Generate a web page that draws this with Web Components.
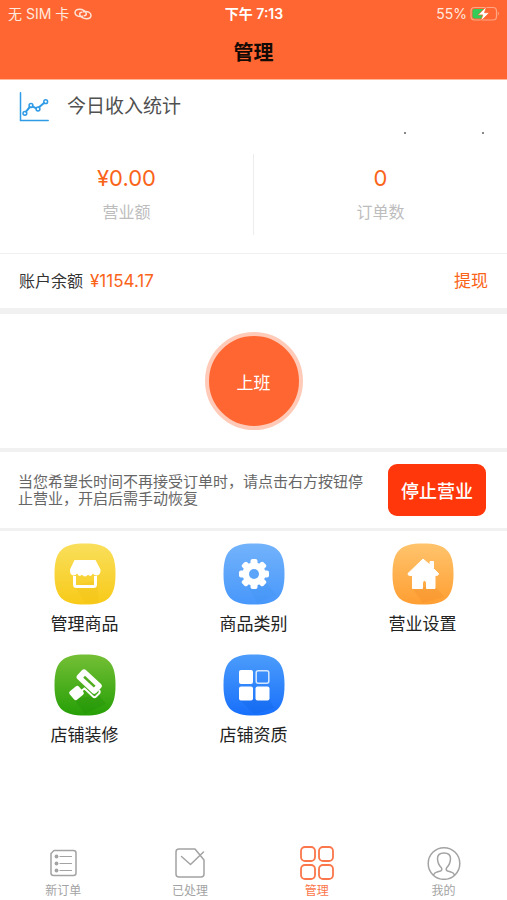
<!DOCTYPE html>
<html lang="zh-CN">
<head>
<meta charset="utf-8">
<meta name="viewport" content="width=device-width, initial-scale=1">
<title>管理</title>
<style>
html, body { margin: 0; min-height: 100%; }
body {
  font-family: Inter, "Noto Sans CJK SC", sans-serif;
  background: #fff;
  color: #333;
  --brand: #ff6632;
  --accent: #fa6419;
  --band: #f1f1f1;
}
</style>
</head>
<body>
<manage-page></manage-page>

<script>
const define = (name, html, setup) => {
  const template = document.createElement('template');
  template.innerHTML = html;
  customElements.define(name, class extends HTMLElement {
    constructor() {
      super();
      this.attachShadow({ mode: 'open' }).append(template.content.cloneNode(true));
    }
    connectedCallback() { if (setup) setup(this, this.shadowRoot); }
  });
};

define('status-bar', `
<style>
:host { display: grid; grid-template-columns: 1fr auto 1fr; align-items: center; height: 28px; padding: 0 7px 0 8px; color: #ffe9df; font-size: 14px; line-height: 20px; }
.side { display: flex; align-items: center; gap: 5px; }
.end { justify-content: flex-end; gap: 3px; }
b { font-weight: 600; color: #fff; }
svg { display: block; }
</style>
<div class="side"><span>无 SIM 卡</span>
  <svg width="18" height="12" viewBox="0 0 18 12" fill="none" stroke="#ffe3d6" stroke-width="1.5" stroke-linecap="round">
    <path d="M8.500 8.300C4.500 9.300 1 7.500 1 4.700C1 2.500 3 1.200 5.400 1.200C8.700 1.200 12.300 3.300 12.300 5.800C12.300 7 11.300 7.700 10.200 7.700"/>
    <path d="M9.500 3.700C13.500 2.700 17 4.500 17 7.300C17 9.500 15 10.800 12.600 10.800C9.300 10.800 5.700 8.700 5.700 6.200C5.700 5 6.700 4.300 7.800 4.300"/>
  </svg>
</div>
<b>下午 7:13</b>
<div class="side end"><span>55%</span>
  <svg width="30" height="16" viewBox="0 0 30 16">
    <rect x="1" y="1.500" width="25.500" height="12.500" rx="3.500" fill="none" stroke="#ffa685" stroke-width="1.200"/>
    <path d="M27.800 5.500Q30 7.700 27.800 10Z" fill="#ffa685"/>
    <path d="M4.500 3H14V12.500H4.500Q2.500 12.500 2.500 10.500V5Q2.500 3 4.500 3Z" fill="#35cb58"/>
    <path d="M16.500 0.500L8 8.900H12.800L10.700 15.300L19.300 6.700H14.500Z" fill="#fff" stroke="#ff6632" stroke-width=".7"/>
  </svg>
</div>`);

define('page-header', `
<style>
:host { display: block; background: var(--brand); border-bottom: 1px solid #ffb89c; }
h1 { margin: 0; height: 51px; font-size: 20px; line-height: 50px; font-weight: 700; text-align: center; color: #140a05; }
</style>
<status-bar></status-bar>
<h1><slot></slot></h1>`);

define('stat-value', `
<style>
:host { display: flex; flex-direction: column; align-items: center; flex: 1; height: 81px; }
.value { margin-top: 10px; font-size: 22px; line-height: 28px; color: var(--accent); }
.label { margin-top: 8px; font-size: 16px; line-height: 24px; color: #bdbdbd; }
</style>
<span class="value"><slot></slot></span>
<span class="label"><slot name="label"></slot></span>`);

define('income-card', `
<style>
:host { display: block; border-bottom: 1px solid #f0f0f0; padding-bottom: 18px; }
header { display: flex; align-items: center; gap: 18px; padding: 12px 19px 0; height: 30px; }
h2 { margin: 0; font-size: 19px; line-height: 28px; font-weight: 400; color: #505050; }
svg { display: block; }
.marks { display: flex; justify-content: flex-end; gap: 76px; padding: 10px 23px 0; height: 22px; }
.marks i { width: 2px; height: 2px; background: #888; }
.stats { display: flex; }
::slotted(:first-of-type) { border-right: 1px solid #ededed; }
</style>
<header>
  <svg width="30" height="30" viewBox="0 0 30 30" fill="none" stroke="#2f9be6" stroke-width="1.500" stroke-linecap="round">
    <path d="M1.500 .8V28.500H29.200"/>
    <path d="M7 19.600L10.800 15M13.500 14.300L17.200 16.300M20 15.300L25 11" stroke-width="2"/>
    <circle cx="5.900" cy="21.300" r="1.900"/><circle cx="12" cy="13.500" r="1.900"/><circle cx="19" cy="17" r="1.900"/><circle cx="26.700" cy="9.700" r="1.900"/>
  </svg>
  <h2>今日收入统计</h2>
</header>
<div class="marks" aria-hidden="true"><i></i><i></i></div>
<div class="stats"><slot></slot></div>`);

define('balance-row', `
<style>
:host { display: flex; align-items: center; height: 54px; padding: 0 19px; font-size: 16px; line-height: 24px; border-bottom: 6px solid var(--band); }
.amount { color: var(--accent); margin-left: 7px; flex: 1; font-size: 17px; }
a { color: var(--accent); text-decoration: none; font-size: 17px; }
</style>
<span>账户余额</span><span class="amount"><slot></slot></span><a href="#withdraw">提现</a>`);

define('shift-panel', `
<style>
:host { display: flex; justify-content: center; padding: 18px 0; border-bottom: 4px solid var(--band); }
button { box-sizing: border-box; width: 98px; height: 98px; padding: 0; border: 4px solid #ffcbb8; border-radius: 50%; background: var(--brand); color: #fff; font: inherit; font-size: 17px; }
</style>
<button type="button"><slot></slot></button>`);

define('pause-panel', `
<style>
:host { display: flex; align-items: center; justify-content: space-between; gap: 20px; height: 76px; padding: 0 21px 0 18px; border-bottom: 3px solid var(--band); }
p { margin: 0; flex: 0 1 346px; font-size: 15px; line-height: 17px; color: #666; }
button { flex: none; width: 98px; height: 52px; padding: 0; border: 0; border-radius: 9px; background: #ff370a; color: #fff; font: inherit; font-size: 18px; font-weight: 500; }
</style>
<p><slot></slot></p><button type="button">停止营业</button>`);

const tiles = {
  goods: ['#f9df5c', '#f8ca18', `
    <path d="M21 43L31 60H45L43 37Z" fill="#edba10" opacity=".2"/>
    <path d="M20.500 17H41.500L46.500 26.500Q47 32 42.500 32.500Q40 32.500 39 30.500Q37 34.500 34 31.800Q31 35 28 31.800Q25 34.500 23 30.500Q22 32.500 19.500 32.500Q15.500 32 16 26.500Z" fill="#fff"/>
    <path d="M20.500 33V41.500Q20.500 43.500 22.500 43.500H39.500Q41.500 43.500 41.500 41.500V33" fill="none" stroke="#fff" stroke-width="3"/>`],
  category: ['#73b3fb', '#4797fb', `
    <path d="M25 43L34 60L53 52L42 38Z" fill="#398be9" opacity=".15"/>
    <g fill="#fff"><circle cx="31" cy="31" r="11.500"/>
    <rect x="27.500" y="16" width="7" height="30" rx="2"/><rect x="16" y="27.500" width="30" height="7" rx="2"/>
    <g transform="rotate(45 31 31)"><rect x="27.500" y="16" width="7" height="30" rx="2"/><rect x="16" y="27.500" width="30" height="7" rx="2"/></g></g>
    <circle cx="31" cy="31" r="5" fill="#5ca5fb"/>`],
  settings: ['#ffc46d', '#ff9e32', `
    <path d="M20 45L31 60L52 54L43 43Z" fill="#eb8822" opacity=".25"/>
    <path d="M31 16L38 22V18.500H41.500V25.500L46.500 30.500Q46.500 32.500 44.500 32.500H43V45.500H34.500V40Q34.500 37.500 32.500 37.500Q30.500 37.500 30.500 40V45.500H20.500V32.500H17.500Q15.500 32 16 30.500Z" fill="#fff" stroke="#fff" stroke-width="1" stroke-linejoin="round"/>`],
  decorate: ['#75bf35', '#259f06', `
    <path d="M20 45L31 60L52 50L45 41Z" fill="#168304" opacity=".2"/>
    <g transform="rotate(43 35 27)"><rect x="22.500" y="21" width="26" height="12.500" rx="3" fill="#fff"/><path d="M28.500 27.200H43" stroke="#52ad22" stroke-width="2.500"/></g>
    <rect x="16.500" y="33.500" width="12" height="11" rx="2" fill="#fff" transform="rotate(-40 22.500 39)"/>
    <path d="M26.500 37.500L30.500 34.500L39 42.500Q40.500 44 42 42.500L45 39.500Q46.500 38 45 36" fill="none" stroke="#fff" stroke-width="1.900"/>`],
  license: ['#4c9dfb', '#176ffb', `
    <path d="M17 46L31 60L51 54L46 45Z" fill="#0c5edc" opacity=".25"/>
    <g fill="#fff"><rect x="16" y="16" width="14" height="14" rx="2"/><rect x="16" y="32.500" width="14" height="14" rx="2"/><rect x="32.500" y="32.500" width="14" height="14" rx="2"/></g>
    <rect x="33.200" y="16.700" width="12.600" height="12.600" rx="2" fill="none" stroke="#d6e8ff" stroke-width="1.500"/>`]
};

define('app-tile', `
<style>
:host { display: block; }
a { display: flex; flex-direction: column; align-items: center; gap: 7px; color: #222; text-decoration: none; font-size: 17px; line-height: 24px; }
svg { display: block; }
</style>
<a href="#"><svg width="62" height="62" viewBox="0 0 62 62"></svg><slot></slot></a>`, (el, root) => {
  const kind = el.getAttribute('icon');
  const [top, bottom, art] = tiles[kind];
  root.querySelector('a').href = '#' + kind;
  root.querySelector('svg').innerHTML = `
    <defs><linearGradient id="g" x2="0" y2="1"><stop stop-color="${top}"/><stop offset="1" stop-color="${bottom}"/></linearGradient>
    <clipPath id="c"><path d="M31 .5C54 .5 61.500 8 61.500 31S54 61.500 31 61.500S.5 54 .5 31S8 .5 31 .5Z"/></clipPath></defs>
    <g clip-path="url(#c)"><path d="M0 0H62V62H0Z" fill="url(#g)"/>${art}</g>`;
});

const tabs = {
  orders: `<path d="M8 4.500H27.500Q30 4.500 30 7V27Q30 29.500 27.500 29.500H7.500Q5 29.500 5 27V7.500Z"/><path d="M14 10.500H25.500M14 17.500H25.500M14 24.500H25.500" stroke-width="1.200"/><g fill="currentColor" stroke="none"><circle cx="10.500" cy="10.500" r="1.900"/><circle cx="10.500" cy="17.500" r="1.900"/><circle cx="10.500" cy="24.500" r="1.900"/></g>`,
  done: `<path d="M22 3H6Q3 3 3 6V28Q3 31 6 31H28Q31 31 31 28V14Z"/><path d="M8.500 10.500L17.500 18.500L30.500 6"/>`,
  manage: `<g stroke-width="1.800"><rect x="1" y="1" width="14" height="14" rx="4"/><rect x="19" y="1" width="14" height="14" rx="4"/><rect x="1" y="19" width="14" height="14" rx="4"/><rect x="19" y="19" width="14" height="14" rx="4"/></g>`,
  mine: `<circle cx="17" cy="17.500" r="15.800"/><path d="M6.500 29Q7.500 26.500 10 26L13.500 25Q15.500 24 14.500 22Q10.500 18 10.500 12.500Q10.500 7 17 7T23.500 12.500Q23.500 18 19.500 22Q18.500 24 20.500 25L24 26Q26.500 26.500 27.500 29"/>`
};

define('tab-item', `
<style>
:host { flex: 1; color: #a3a3a3; }
:host([active]) { color: #fb764b; }
a { display: flex; flex-direction: column; align-items: center; gap: 2px; color: inherit; text-decoration: none; font-size: 12px; line-height: 18px; }
svg { display: block; }
</style>
<a href="#"><svg width="34" height="34" viewBox="0 0 34 34" fill="none" stroke="currentColor" stroke-width="1.500" stroke-linejoin="round" stroke-linecap="round"></svg><slot></slot></a>`, (el, root) => {
  const kind = el.getAttribute('icon');
  root.querySelector('a').href = '#' + kind;
  root.querySelector('svg').innerHTML = tabs[kind];
});

define('manage-page', `
<style>
:host { display: flex; flex-direction: column; min-height: 100vh; }
.tiles { display: grid; grid-template-columns: repeat(3, 1fr); row-gap: 18px; padding-top: 12px; flex: 1; align-content: start; }
nav { display: flex; padding-top: 16px; }
</style>
<page-header>管理</page-header>
<income-card>
  <stat-value>¥0.00<span slot="label">营业额</span></stat-value>
  <stat-value>0<span slot="label">订单数</span></stat-value>
</income-card>
<balance-row>¥1154.17</balance-row>
<shift-panel>上班</shift-panel>
<pause-panel>当您希望长时间不再接受订单时，请点击右方按钮停止营业，开启后需手动恢复</pause-panel>
<div class="tiles">
  <app-tile icon="goods">管理商品</app-tile>
  <app-tile icon="category">商品类别</app-tile>
  <app-tile icon="settings">营业设置</app-tile>
  <app-tile icon="decorate">店铺装修</app-tile>
  <app-tile icon="license">店铺资质</app-tile>
</div>
<nav>
  <tab-item icon="orders">新订单</tab-item>
  <tab-item icon="done">已处理</tab-item>
  <tab-item icon="manage" active>管理</tab-item>
  <tab-item icon="mine">我的</tab-item>
</nav>`);
</script>
</body>
</html>
